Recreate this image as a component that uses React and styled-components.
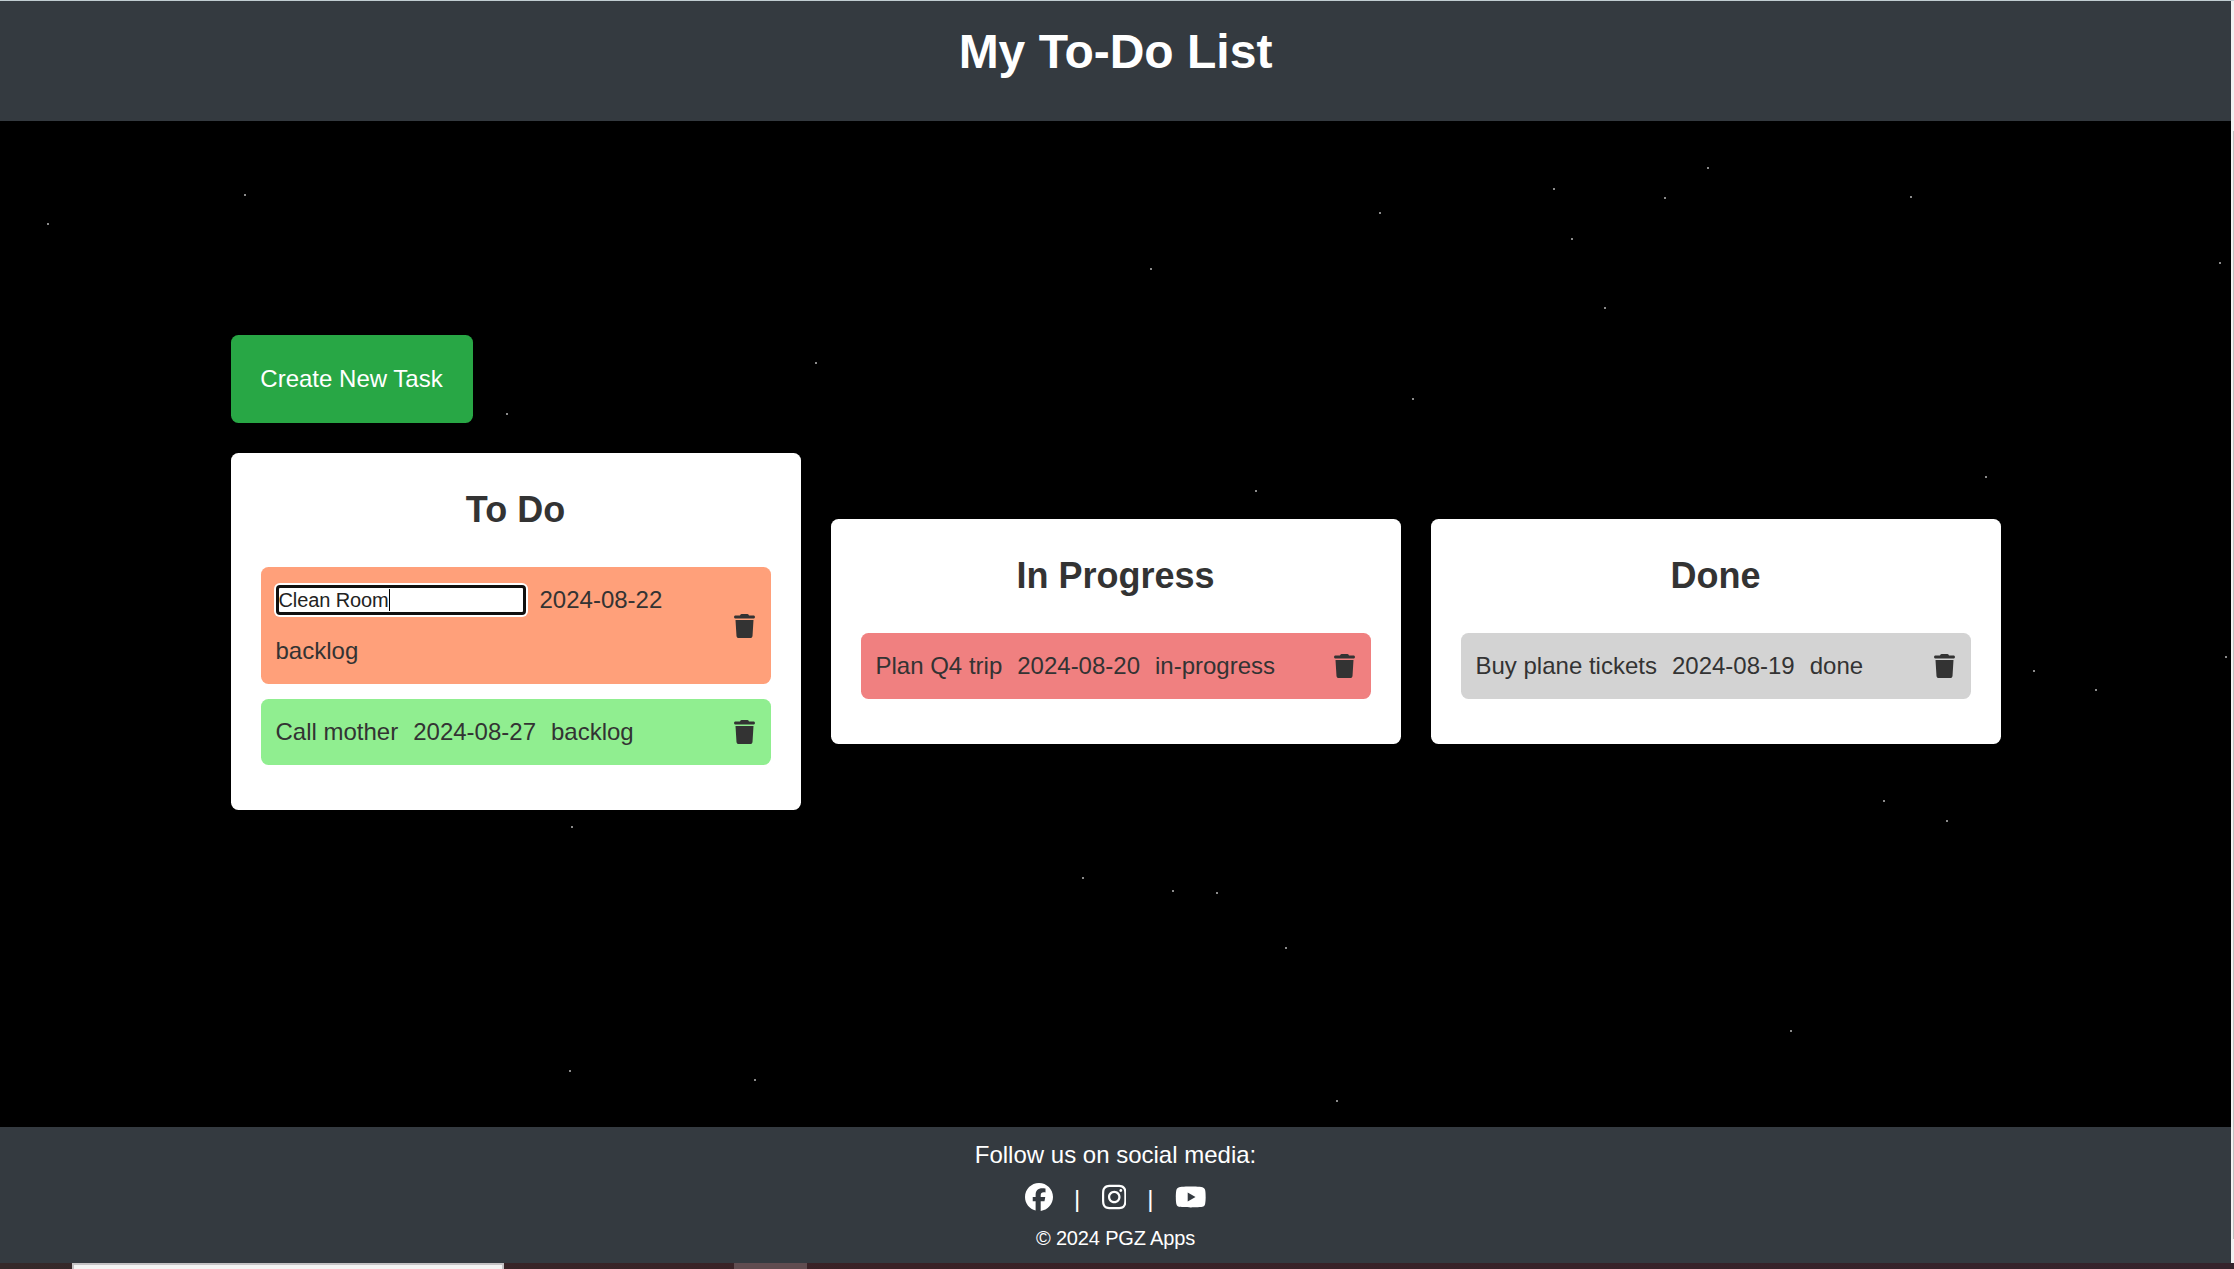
import React from "react";
import styled, { createGlobalStyle } from "styled-components";
import { FaTrash, FaFacebook, FaInstagram, FaYoutube } from "react-icons/fa6";

const Global = createGlobalStyle`
  * { box-sizing: border-box; }
  body { margin: 0; background: #000; overflow: hidden; font-family: "Liberation Sans", Arial, sans-serif; }
  h1, h2, p { margin: 0; }
`;

const Screen = styled.div`
  width: 2234px;
  height: 1269px;
  display: flex;
  flex-direction: column;
  overflow: hidden;
  background: #000;
  font-size: 24px;
  line-height: 36px;
  color: #333;
`;

const Viewport = styled.div`
  height: 1263px;
  display: flex;
  border-top: 1px solid #c1cdd2;
`;

const Page = styled.div`
  width: 2231px;
  display: flex;
  flex-direction: column;
`;

const Header = styled.header`
  height: 120px;
  padding-top: 21px;
  background: #343a40;
  color: #fff;
  text-align: center;
`;

const Title = styled.h1`
  font-size: 48px;
  line-height: 60px;
  font-weight: 700;
`;

const Main = styled.main`
  position: relative;
  flex: 1;
  padding-top: 214px;
`;

const Star = styled.i`
  position: absolute;
  width: 2px;
  height: 2px;
  background: #8a8a8a;
`;

const Board = styled.div`
  width: 1770px;
  margin: 0 auto;
`;

const CreateButton = styled.button`
  display: block;
  width: 242px;
  height: 88px;
  margin-bottom: 30px;
  padding: 0;
  border: 0;
  border-radius: 7.5px;
  background: #28a745;
  color: #fff;
  font: 24px/36px "Liberation Sans", Arial, sans-serif;
`;

const Columns = styled.div`
  display: flex;
  align-items: center;
  gap: 30px;
`;

const Column = styled.section`
  width: 570px;
  padding: 30px;
  border-radius: 7.5px;
  background: #fff;
`;

const ColumnTitle = styled.h2`
  height: 84px;
  font-size: 36px;
  line-height: 54px;
  font-weight: 700;
  text-align: center;
`;

const Task = styled.div`
  display: flex;
  align-items: center;
  justify-content: space-between;
  margin-bottom: 15px;
  padding: 15px;
  border-radius: 7.5px;
  background: ${(p) => p.$color};
`;

const Details = styled.div`
  width: 405px;
  display: flex;
  flex-wrap: wrap;
  align-items: center;
  gap: 15px;
`;

const Field = styled.span`
  white-space: nowrap;
`;

const EditField = styled.div`
  display: flex;
  align-items: center;
  width: 250px;
  height: 30px;
  margin-right: -1px;
  border: 3px solid #101010;
  border-radius: 4px;
  background: #fff;
  box-shadow: 0 0 0 2px #fff;
  color: #222;
  font-size: 20px;
  line-height: 23px;
  letter-spacing: -0.1px;
`;

const Caret = styled.span`
  width: 1px;
  height: 22px;
  background: #000;
`;

const Trash = styled(FaTrash)`
  width: 21px;
  height: 24px;
  margin-right: 0.7px;
`;

const Footer = styled.footer`
  height: 136px;
  padding-top: 10px;
  background: #343a40;
  color: #fff;
  text-align: center;
`;

const Social = styled.div`
  display: flex;
  justify-content: center;
  align-items: center;
  height: 48px;
  gap: 21.2px;
`;

const SocialIcon = styled.svg`
  flex: none;
  width: ${(p) => p.$width}px;
  height: 28px;
`;

const Divider = styled.span`
  padding-top: 4px;
`;

const Copyright = styled.p`
  font-size: 20px;
  line-height: 34px;
  letter-spacing: -0.16px;
`;

const Scrollbar = styled.div`
  width: 3px;
  padding: 130px 0 24px 2px;
  background: #f1f1f1;
`;

const Thumb = styled.div`
  height: 100%;
  background: #c1c1c1;
`;

const Taskbar = styled.div`
  height: 6px;
  display: flex;
  background: linear-gradient(90deg, #35292a, #3a2126 40%, #35232c);
`;

const SearchBox = styled.div`
  width: 432px;
  margin-left: 72px;
  border: 2px solid #c4c2c4;
  border-bottom: 0;
  background: #f3f3f3;
`;

const ActiveApp = styled.div`
  width: 73px;
  margin-left: 230px;
  background: #604c50;
`;

const stars = [
  [244, 194], [47, 223], [1150, 268], [1379, 212], [1553, 188], [1571, 238], [1604, 307],
  [1664, 197], [1707, 167], [1910, 196], [2219, 262], [815, 362], [506, 413], [1412, 398],
  [1255, 490], [1985, 476], [571, 826], [1082, 877], [1172, 890], [1216, 892], [1285, 947],
  [569, 1070], [754, 1079], [1336, 1100], [1790, 1030], [1883, 800], [1946, 820],
  [2033, 670], [2095, 689], [2225, 656],
];

const columns = [
  {
    title: "To Do",
    tasks: [
      { name: "Clean Room", date: "2024-08-22", status: "backlog", color: "#ffa07a", editing: true },
      { name: "Call mother", date: "2024-08-27", status: "backlog", color: "#90ee90" },
    ],
  },
  { title: "In Progress", tasks: [{ name: "Plan Q4 trip", date: "2024-08-20", status: "in-progress", color: "#f08080" }] },
  { title: "Done", tasks: [{ name: "Buy plane tickets", date: "2024-08-19", status: "done", color: "#d3d3d3" }] },
];

export default function App() {
  return (
    <Screen>
      <Global />
      <Viewport>
        <Page>
          <Header>
            <Title>My To-Do List</Title>
          </Header>
          <Main>
            {stars.map(([x, y]) => (
              <Star key={`${x}-${y}`} style={{ left: x, top: y - 121 }} />
            ))}
            <Board>
              <CreateButton>Create New Task</CreateButton>
              <Columns>
                {columns.map((c) => (
                  <Column key={c.title}>
                    <ColumnTitle>{c.title}</ColumnTitle>
                    {c.tasks.map((t) => (
                      <Task key={t.name} $color={t.color}>
                        <Details>
                          {t.editing ? <EditField>{t.name}<Caret /></EditField> : <Field>{t.name}</Field>}
                          <Field>{t.date}</Field>
                          <Field>{t.status}</Field>
                        </Details>
                        <Trash />
                      </Task>
                    ))}
                  </Column>
                ))}
              </Columns>
            </Board>
          </Main>
          <Footer>
            <p>Follow us on social media:</p>
            <Social>
              <SocialIcon as={FaFacebook} $width={28} />
              <Divider>|</Divider>
              <SocialIcon as={FaInstagram} $width={24.5} />
              <Divider>|</Divider>
              <SocialIcon as={FaYoutube} $width={31.5} />
            </Social>
            <Copyright>© 2024 PGZ Apps</Copyright>
          </Footer>
        </Page>
        <Scrollbar>
          <Thumb />
        </Scrollbar>
      </Viewport>
      <Taskbar>
        <SearchBox />
        <ActiveApp />
      </Taskbar>
    </Screen>
  );
}
